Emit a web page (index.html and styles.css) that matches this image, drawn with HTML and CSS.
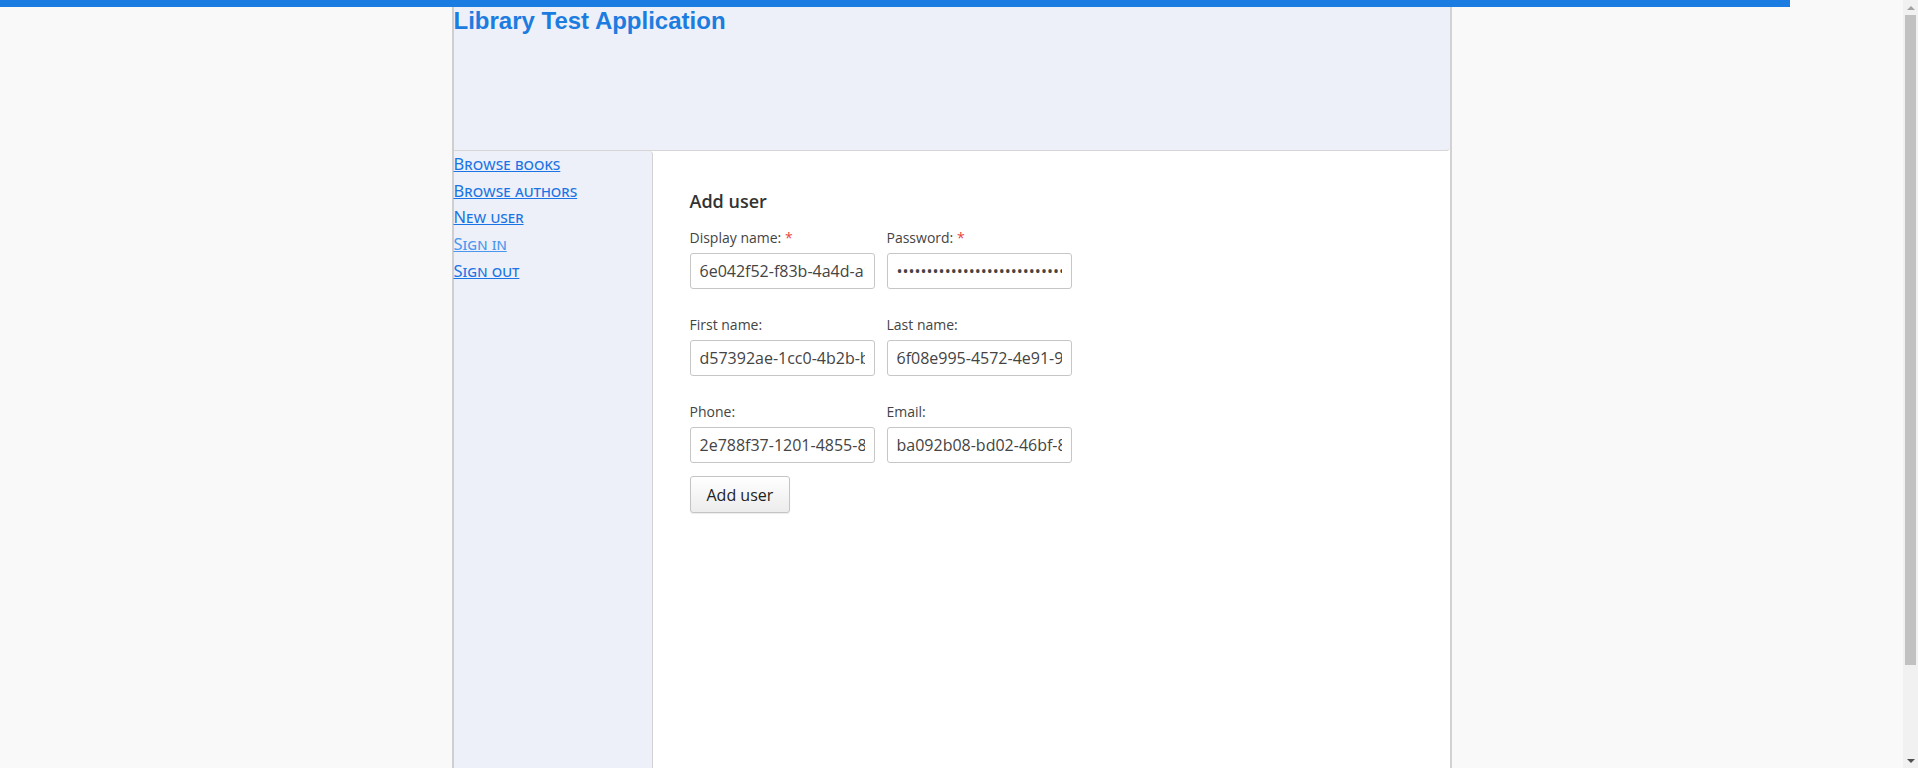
FILE: index.html
```html
<!DOCTYPE html>
<html lang="en">
<head>
<meta charset="utf-8">
<title>Library Test Application</title>
<link rel="stylesheet" href="styles.css">
</head>
<body>
<div class="topbar"></div>
<div class="page">
  <header class="masthead">
    <h1 class="site-title">Library Test Application</h1>
  </header>
  <div class="body-row">
    <nav class="sidebar">
      <ul class="nav-list">
        <li><a class="nav-link" href="#">Browse books</a></li>
        <li><a class="nav-link" href="#">Browse authors</a></li>
        <li><a class="nav-link" href="#">New user</a></li>
        <li><a class="nav-link nav-link-light" href="#">Sign in</a></li>
        <li><a class="nav-link" href="#">Sign out</a></li>
      </ul>
    </nav>
    <main class="content">
      <form class="user-form">
        <h2 class="form-title">Add user</h2>
        <div class="form-row">
          <div class="field">
            <label class="field-label">Display name: <span class="req">*</span></label>
            <input class="field-input" type="text" value="6e042f52-f83b-4a4d-a1c7-3b9e2f4d8a10">
          </div>
          <div class="field">
            <label class="field-label">Password: <span class="req">*</span></label>
            <input class="field-input" type="password" value="0c1f6d2a-7b3e-4f90-9a2d-5e8c1b7f3d42">
          </div>
        </div>
        <div class="form-row">
          <div class="field">
            <label class="field-label">First name:</label>
            <input class="field-input" type="text" value="d57392ae-1cc0-4b2b-b3f1-8e2d7c9a0f15">
          </div>
          <div class="field">
            <label class="field-label">Last name:</label>
            <input class="field-input" type="text" value="6f08e995-4572-4e91-9c3a-2b7d1e6f8a04">
          </div>
        </div>
        <div class="form-row form-row-last">
          <div class="field">
            <label class="field-label">Phone:</label>
            <input class="field-input" type="text" value="2e788f37-1201-4855-8a6c-9f3e2d1b7c50">
          </div>
          <div class="field">
            <label class="field-label">Email:</label>
            <input class="field-input" type="text" value="ba092b08-bd02-46bf-8e1a-4c7d9f2b3e61">
          </div>
        </div>
        <button class="btn" type="button">Add user</button>
      </form>
    </main>
  </div>
</div>
<div class="scrollbar" aria-hidden="true">
  <div class="scroll-arrow scroll-arrow-up"></div>
  <div class="scroll-track"><div class="scroll-thumb"></div></div>
  <div class="scroll-arrow scroll-arrow-down"></div>
</div>
</body>
</html>
```

FILE: styles.css
```css
html, body {
  margin: 0;
  padding: 0;
}

body {
  background: #f9f9f9;
  font-family: "Open Sans", "Noto Sans", sans-serif;
  color: #333;
  margin-right: 15px;
}

.topbar {
  height: 7px;
  width: 94.06%;
  background: #1b7de2;
}

.page {
  width: 1000px;
  box-sizing: border-box;
  margin: 0 auto;
  background: #ffffff;
  border-left: 2px solid #cfcfcf;
  border-right: 2px solid #d2d2d2;
}

.masthead {
  height: 144px;
  box-sizing: border-box;
  background: #edf0f8;
  border-bottom: 1px solid #d6d6d6;
  border-bottom-right-radius: 4px;
}

.site-title {
  margin: 0;
  font-family: "Liberation Sans", Arial, sans-serif;
  font-weight: bold;
  font-size: 24px;
  line-height: 27px;
  color: #1c7ce0;
}

.body-row {
  display: flex;
  min-height: 720px;
}

.sidebar {
  width: 199px;
  flex: none;
  box-sizing: border-box;
  background: #edf0f8;
  border-right: 1px solid #d2d2d2;
  border-top-right-radius: 4px;
}

.nav-list {
  list-style: none;
  margin: 0;
  padding: 0;
}

.nav-list li {
  font-size: 16.5px;
  line-height: 26.7px;
}

.nav-link {
  font-family: "Noto Sans", sans-serif;
  font-variant: small-caps;
  color: #1b74e4;
  text-decoration: underline;
}

.nav-link-light {
  color: #4b97ee;
}

.content {
  flex: 1;
  padding: 38px 37px;
}

.form-title {
  margin: 0 0 15px 0;
  font-size: 18px;
  font-weight: 600;
  line-height: 24px;
  color: #333;
}

.form-row {
  display: flex;
  gap: 12px;
  margin-bottom: 26px;
}

.form-row-last {
  margin-bottom: 13px;
}

.field {
  display: flex;
  flex-direction: column;
  width: 185px;
}

.field-label {
  font-size: 14px;
  line-height: 19px;
  color: #444;
  margin-bottom: 6px;
}

.req {
  color: #e8453c;
}

.field-input {
  box-sizing: border-box;
  width: 185px;
  height: 36px;
  padding: 0 9px;
  border: 1px solid #c6c6c6;
  border-radius: 3px;
  background: #fff;
  font-family: "Open Sans", sans-serif;
  font-size: 16px;
  color: #444;
  outline: none;
}

.btn {
  height: 37px;
  padding: 0 16px;
  border: 1px solid #c4c4c4;
  border-radius: 3px;
  background: linear-gradient(#ffffff, #ececec);
  box-shadow: 0 1px 1px rgba(0, 0, 0, 0.08);
  font-family: "Open Sans", sans-serif;
  font-size: 16px;
  color: #222;
}

.scrollbar {
  position: fixed;
  top: 0;
  right: 0;
  bottom: 0;
  width: 15px;
  background: #f1f1f1;
  display: flex;
  flex-direction: column;
}

.scroll-arrow {
  height: 15px;
  flex: none;
  display: flex;
  align-items: center;
  justify-content: center;
}

.scroll-arrow-up::before,
.scroll-arrow-down::before {
  content: "";
  width: 0;
  height: 0;
  border-left: 4px solid transparent;
  border-right: 4px solid transparent;
}

.scroll-arrow-up::before {
  border-bottom: 4px solid #a3a3a3;
}

.scroll-arrow-down::before {
  border-top: 4px solid #505050;
}

.scroll-track {
  flex: 1;
  padding: 0 2px;
}

.scroll-thumb {
  height: 650px;
  background: #c1c1c1;
}
```
